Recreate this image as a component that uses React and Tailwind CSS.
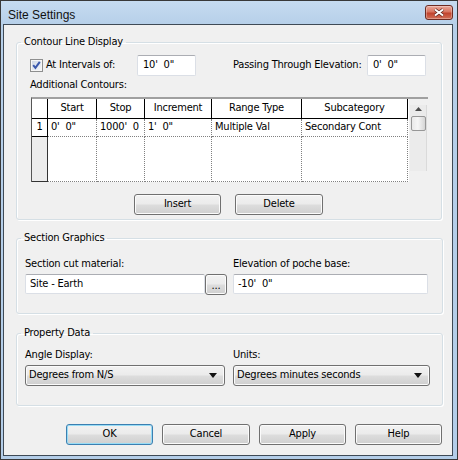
import React from 'react';

const btnBase =
  'h-[21px] rounded-[3px] border bg-[linear-gradient(#f2f2f2_0%,#ebebeb_48%,#dddddd_52%,#cfcfcf_100%)] text-black flex items-center';

function Button({ children, className = '', primary = false }) {
  return (
    <div
      className={`${btnBase} justify-center ${
        primary
          ? 'border-[#3c7fb1] shadow-[inset_0_0_0_1px_#98dcf5]'
          : 'border-[#707070] shadow-[inset_0_0_0_1px_#fbfbfb]'
      } ${className}`}
    >
      {children}
    </div>
  );
}

function TextBox({ value, className = '' }) {
  return (
    <div
      className={`h-[20px] bg-white border border-[#dbdfe6] border-t-[#abadb3] rounded-[2px] flex items-center pl-[4px] whitespace-pre ${className}`}
    >
      {value}
    </div>
  );
}

function Combo({ value, className = '' }) {
  return (
    <div
      className={`${btnBase} border-[#707070] shadow-[inset_0_0_0_1px_#fbfbfb] justify-between pl-[3px] pr-[7px] ${className}`}
    >
      <span>{value}</span>
      <svg width="8" height="5" viewBox="0 0 8 5">
        <path d="M0 0 H8 L4 5 Z" fill="#111" />
      </svg>
    </div>
  );
}

function Group({ title, children, className = '' }) {
  return (
    <fieldset
      className={`mx-[12px] p-0 border border-[#d5dfe5] rounded-[3px] shadow-[inset_1px_1px_0_#fff,1px_1px_0_#fff] ${className}`}
    >
      <legend className="ml-[4px] px-[3px] leading-[14px]">{title}</legend>
      {children}
    </fieldset>
  );
}

function CheckBox() {
  return (
    <svg width="13" height="13" viewBox="0 0 13 13">
      <defs>
        <linearGradient id="cb" x1="0" y1="0" x2="1" y2="1">
          <stop offset="0" stopColor="#cfd8e6" />
          <stop offset="1" stopColor="#f3f5f8" />
        </linearGradient>
      </defs>
      <rect x="0.5" y="0.5" width="12" height="12" fill="#f6f6f6" stroke="#8e8f8f" />
      <rect x="2" y="2" width="9" height="9" fill="url(#cb)" />
      <path d="M3.2 6.2 L5.4 8.8 L9.8 2.8" fill="none" stroke="#3a58ac" strokeWidth="2" />
    </svg>
  );
}

const cols = [
  { label: 'Start', w: 'w-[49px]', v: "0'  0\"" },
  { label: 'Stop', w: 'w-[48px]', v: "1000'  0" },
  { label: 'Increment', w: 'w-[67px]', v: "1'  0\"" },
  { label: 'Range Type', w: 'w-[90px]', v: 'Multiple Val' },
  { label: 'Subcategory', w: 'w-[106px]', v: 'Secondary Cont' },
];

function ContourGrid() {
  return (
    <div className="mt-[5px] flex w-[397px] h-[85px]">
      <div className="w-[378px] border-t-2 border-t-[#a0a0a0] border-l border-l-[#555] bg-white flex flex-col">
        {/* header */}
        <div className="flex h-[20px]">
          <div className="w-[16px] border-r border-b border-black bg-white" />
          {cols.map((c) => (
            <div
              key={c.label}
              className={`${c.w} border-r border-b border-black flex items-center justify-center whitespace-nowrap`}
            >
              {c.label}
            </div>
          ))}
        </div>
        {/* row 1 */}
        <div className="flex h-[18px]">
          <div className="w-[16px] border-r border-b border-black flex items-center justify-center">1</div>
          {cols.map((c) => (
            <div
              key={c.label}
              className={`${c.w} border-r border-b border-dotted border-[#808080] flex items-center pl-[3px] whitespace-pre overflow-hidden`}
            >
              {c.v}
            </div>
          ))}
        </div>
        {/* filler */}
        <div className="flex h-[45px]">
          <div className="w-[16px] border-r border-b border-[#333] bg-[#ececec]" />
          {cols.map((c) => (
            <div key={c.label} className={`${c.w} border-r border-b border-dotted border-[#808080]`} />
          ))}
        </div>
      </div>
      {/* scrollbar */}
      <div className="w-[19px] border-t-2 border-t-[#a0a0a0] bg-[#f0f0f0] flex flex-col items-center pt-[6px]">
        <div className="w-[17px] h-[66px] bg-[#ebebeb] border-r border-[#dadada] flex flex-col items-center">
          <svg width="7" height="4" viewBox="0 0 7 4" className="mt-[2px]">
            <path d="M0 4 H7 L3.5 0 Z" fill="#4d4d4d" />
          </svg>
          <div className="mt-[5px] w-[15px] h-[15px] rounded-[2px] border border-[#979797] bg-[linear-gradient(90deg,#e9e9e9,#f6f6f6_45%,#d5d5d5)]" />
        </div>
      </div>
    </div>
  );
}

export default function App() {
  return (
    <div className="w-[458px] h-[460px] border border-[#383838] bg-[linear-gradient(#c6dbf0,#b6cfe9_24px,#b3cde8)] flex flex-col font-['DejaVu_Sans_Condensed','DejaVu_Sans',sans-serif] text-[11px] tracking-[-0.2px] text-black">
      {/* title bar */}
      <div className="h-[23px] flex items-start justify-between">
        <div className="pl-[7px] pt-[5px] text-[12px] tracking-normal font-['Liberation_Sans',sans-serif] text-[#111]">
          Site Settings
        </div>
        <div className="mt-[4px] mr-[4px] w-[28px] h-[15px] rounded-[3px] border border-[#6d2b22] bg-[linear-gradient(#eaa99b,#d8745f_45%,#c1432d_55%,#d27058)] shadow-[inset_0_0_0_1px_rgba(255,255,255,0.3)] flex items-center justify-center">
          <svg width="12" height="9" viewBox="0 0 12 9">
            <path d="M2 1.5 L10 7.5 M10 1.5 L2 7.5" stroke="#5a2219" strokeWidth="3.4" />
            <path d="M2 1.5 L10 7.5 M10 1.5 L2 7.5" stroke="#fff" strokeWidth="2" />
          </svg>
        </div>
      </div>

      {/* body */}
      <div className="flex-1 ml-[2px] mr-[4px] mb-[3px] border border-[#3f4a56] bg-[#f0f0f0] flex flex-col">
        <Group title="Contour Line Display" className="mt-[10px]">
          <div className="px-[13px] pt-[6px] pb-[4px]">
            <div className="h-[21px] flex items-center">
              <CheckBox />
              <span className="ml-[3px] w-[91px]">At Intervals of:</span>
              <TextBox value={"10'  0\""} className="w-[59px] h-[21px] pl-[5px]" />
              <span className="ml-[37px] w-[134px]">Passing Through Elevation:</span>
              <TextBox value={"0'  0\""} className="w-[59px] h-[21px] pl-[5px]" />
            </div>
            <div className="mt-[2px] leading-[14px]">Additional Contours:</div>
            <div className="pl-[1px]">
              <ContourGrid />
            </div>
            <div className="mt-[12px] flex">
              <Button className="ml-[104px] w-[87px]">Insert</Button>
              <Button className="ml-[14px] w-[88px]">Delete</Button>
            </div>
          </div>
        </Group>

        <Group title="Section Graphics" className="mt-[11px]">
          <div className="pl-[8px] pr-[14px] pt-[12px] pb-[18px] grid grid-cols-[202px_195px] gap-x-[6px]">
            <div className="leading-[14px]">Section cut material:</div>
            <div className="leading-[14px]">Elevation of poche base:</div>
            <div className="mt-[3px] flex">
              <TextBox value="Site - Earth" className="w-[180px]" />
              <Button className="w-[22px] h-[20px] items-end pb-[3px] leading-none">...</Button>
            </div>
            <TextBox value={"-10'  0\""} className="mt-[3px] w-[195px]" />
          </div>
        </Group>

        <Group title="Property Data" className="mt-[12px]">
          <div className="pl-[8px] pr-[12px] pt-[8px] pb-[19px] grid grid-cols-[200px_197px] gap-x-[8px]">
            <div className="leading-[14px]">Angle Display:</div>
            <div className="leading-[14px]">Units:</div>
            <Combo value="Degrees from N/S" className="mt-[3px] w-[200px]" />
            <Combo value="Degrees minutes seconds" className="mt-[3px] w-[197px]" />
          </div>
        </Group>

        <div className="mt-[18px] mr-[10px] flex justify-end gap-[9px]">
          <Button primary className="w-[87px]">OK</Button>
          <Button className="w-[88px]">Cancel</Button>
          <Button className="w-[87px]">Apply</Button>
          <Button className="w-[87px]">Help</Button>
        </div>
      </div>
    </div>
  );
}
